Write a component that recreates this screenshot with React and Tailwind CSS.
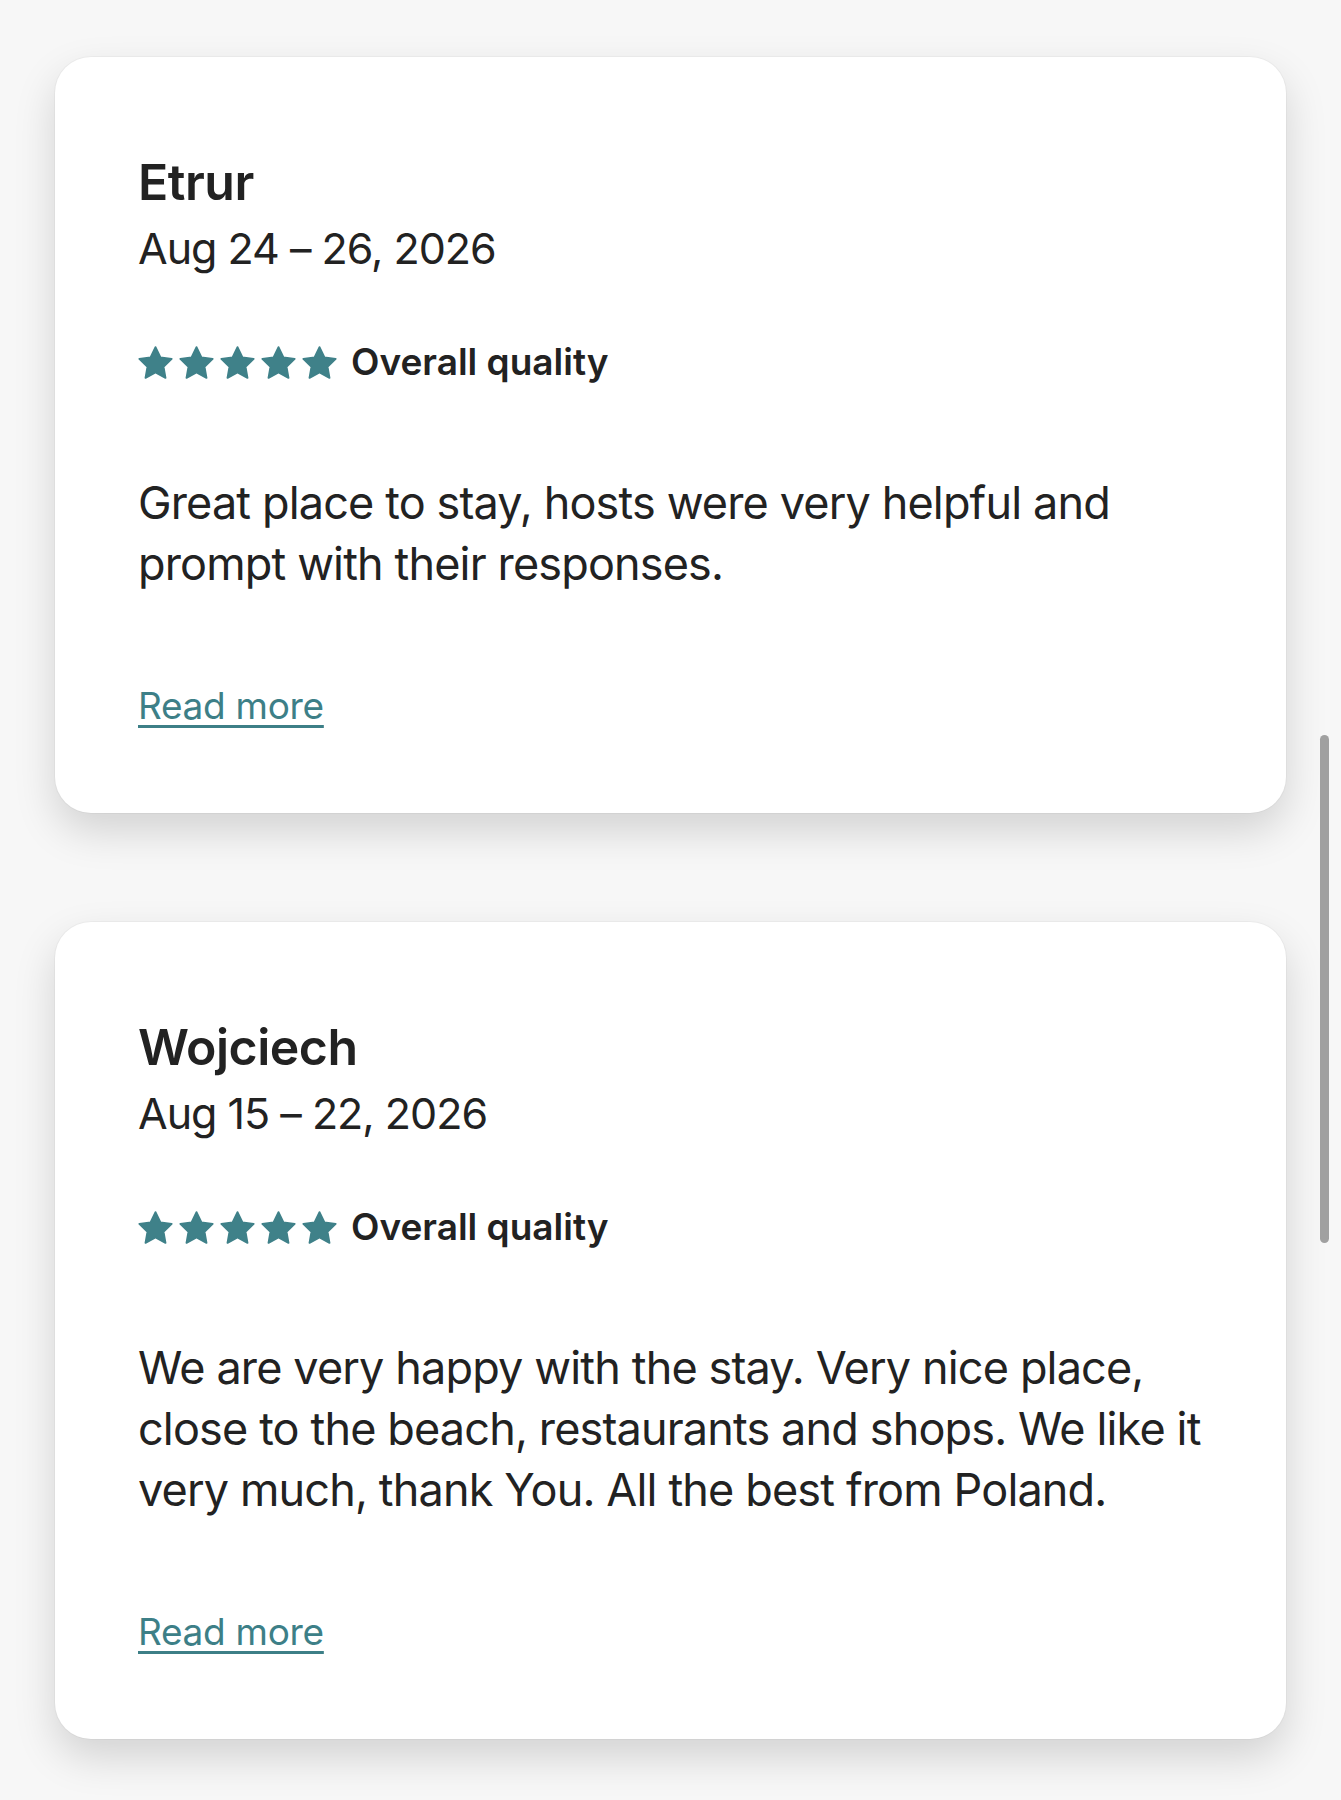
import React from 'react';

const reviews = [
  {
    name: 'Etrur',
    dates: 'Aug 24 – 26, 2026',
    text: 'Great place to stay, hosts were very helpful and prompt with their responses.',
  },
  {
    name: 'Wojciech',
    dates: 'Aug 15 – 22, 2026',
    text: 'We are very happy with the stay. Very nice place, close to the beach, restaurants and shops. We like it very much, thank You. All the best from Poland.',
  },
];

function Star() {
  return (
    <svg viewBox="-1 -1 26 26" className="w-[35px] h-[35px] text-[#3f8189]" fill="currentColor">
      <path
        d="M12 .587l3.668 7.568 8.332 1.151-6.064 5.828 1.48 8.279-7.416-3.967-7.417 3.967 1.481-8.279-6.064-5.828 8.332-1.151z"
        stroke="currentColor"
        strokeWidth="1.4"
        strokeLinejoin="round"
      />
    </svg>
  );
}

function ReviewCard({ review }) {
  return (
    <div className="bg-white rounded-[36px] shadow-[0_18px_42px_rgba(0,0,0,0.15),0_0_0_1px_rgba(0,0,0,0.03)] pl-[83px] pr-[70px] pt-[93px] pb-[85px]">
      {/* Guest */}
      <div className="text-[50px] leading-[64px] font-semibold text-[#222222] tracking-[-0.5px]">
        {review.name}
      </div>
      <div className="text-[43px] leading-[64px] text-[#222222] mt-[2px] tracking-[-1px]">
        {review.dates}
      </div>

      {/* Rating */}
      <div className="flex items-center h-[44px] mt-[60px]">
        <div className="flex gap-[6px]">
          {[0, 1, 2, 3, 4].map((i) => (
            <Star key={i} />
          ))}
        </div>
        <span className="ml-[14px] text-[37px] leading-[44px] font-semibold text-[#222222]">
          Overall quality
        </span>
      </div>

      {/* Body */}
      <p className="mt-[88px] text-[45px] leading-[61px] text-[#222222] tracking-[-0.85px]">
        {review.text}
      </p>

      <a
        href="#"
        className="block w-fit mt-[90px] text-[37px] leading-[44px] text-[#3d7f87] tracking-[-0.3px] underline underline-offset-[6px] decoration-[3px]"
      >
        Read more
      </a>
    </div>
  );
}

export default function App() {
  return (
    <div
      className="relative min-h-[1800px] bg-[#f7f7f7] pt-[57px] px-[55px]"
      style={{ fontFamily: 'Inter, "Noto Sans", sans-serif' }}
    >
      <div className="flex flex-col gap-[109px]">
        {reviews.map((r) => (
          <ReviewCard key={r.name} review={r} />
        ))}
      </div>

      {/* Scrollbar thumb */}
      <div className="absolute right-[12px] top-[735px] w-[9px] h-[508px] rounded-full bg-[#a0a0a0]" />
    </div>
  );
}
